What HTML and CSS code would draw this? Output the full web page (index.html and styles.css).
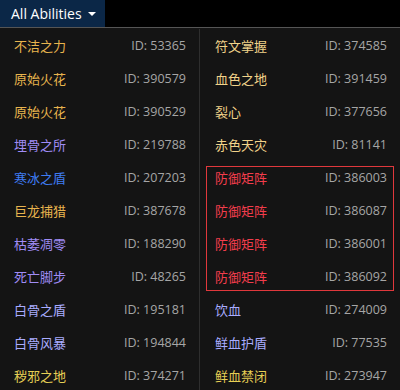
FILE: index.html
```html
<!DOCTYPE html>
<html lang="zh">
<head>
<meta charset="utf-8">
<title>All Abilities</title>
<link rel="stylesheet" href="styles.css">
</head>
<body>
<div class="topbar">
  <button class="filter">All Abilities <span class="caret"></span></button>
</div>
<div class="panel">
  <div class="col left">
    <div class="row"><span class="name gold">不洁之力</span><span class="id">ID: 53365</span></div>
    <div class="row"><span class="name gold">原始火花</span><span class="id">ID: 390579</span></div>
    <div class="row"><span class="name gold">原始火花</span><span class="id">ID: 390529</span></div>
    <div class="row"><span class="name purple">埋骨之所</span><span class="id">ID: 219788</span></div>
    <div class="row"><span class="name blue">寒冰之盾</span><span class="id">ID: 207203</span></div>
    <div class="row"><span class="name gold">巨龙捕猎</span><span class="id">ID: 387678</span></div>
    <div class="row"><span class="name purple">枯萎凋零</span><span class="id">ID: 188290</span></div>
    <div class="row"><span class="name purple">死亡脚步</span><span class="id">ID: 48265</span></div>
    <div class="row"><span class="name peri">白骨之盾</span><span class="id">ID: 195181</span></div>
    <div class="row"><span class="name peri">白骨风暴</span><span class="id">ID: 194844</span></div>
    <div class="row"><span class="name yellow">秽邪之地</span><span class="id">ID: 374271</span></div>
  </div>
  <div class="col right">
    <div class="row"><span class="name cream">符文掌握</span><span class="id">ID: 374585</span></div>
    <div class="row"><span class="name cream">血色之地</span><span class="id">ID: 391459</span></div>
    <div class="row"><span class="name cream">裂心</span><span class="id">ID: 377656</span></div>
    <div class="row"><span class="name cream">赤色天灾</span><span class="id">ID: 81141</span></div>
    <div class="group">
      <div class="row"><span class="name red">防御矩阵</span><span class="id">ID: 386003</span></div>
      <div class="row"><span class="name red">防御矩阵</span><span class="id">ID: 386087</span></div>
      <div class="row"><span class="name red">防御矩阵</span><span class="id">ID: 386001</span></div>
      <div class="row"><span class="name red">防御矩阵</span><span class="id">ID: 386092</span></div>
    </div>
    <div class="row"><span class="name peri">饮血</span><span class="id">ID: 274009</span></div>
    <div class="row"><span class="name peri">鲜血护盾</span><span class="id">ID: 77535</span></div>
    <div class="row"><span class="name yellow">鲜血禁闭</span><span class="id">ID: 273947</span></div>
  </div>
</div>
</body>
</html>
```
FILE: styles.css
```css
html, body {
  margin: 0;
  padding: 0;
  background: #141414;
  height: 100%;
  overflow: hidden;
}
body {
  font-family: "Open Sans", "Noto Sans", "Noto Sans CJK SC", sans-serif;
}
.topbar {
  height: 27px;
  background: #000;
  border-bottom: 1px solid #555;
  display: flex;
}
.filter {
  width: 105px;
  height: 27px;
  background: #0b2747;
  border: none;
  margin: 0;
  padding: 0 0 0 11px;
  color: #fff;
  font-family: "Open Sans", sans-serif;
  font-size: 14px;
  font-weight: 500;
  display: flex;
  align-items: center;
  gap: 6px;
  text-align: left;
}
.caret {
  width: 0;
  height: 0;
  border-left: 4px solid transparent;
  border-right: 4px solid transparent;
  border-top: 4px solid #fff;
  margin-top: 1px;
}
.panel {
  display: flex;
  padding-top: 1px;
  height: 361px;
  overflow: hidden;
}
.col {
  display: flex;
  flex-direction: column;
}
.left {
  width: 199px;
  border-right: 1px solid #2e2e2e;
}
.right {
  width: 200px;
}
.row {
  height: 33px;
  flex-shrink: 0;
  display: flex;
  align-items: center;
  justify-content: space-between;
  padding: 0 13px 0 14px;
  box-sizing: border-box;
}
.right .row {
  padding-left: 15px;
}
.name {
  font-family: "Noto Sans CJK SC", sans-serif;
  font-size: 13px;
}
.id {
  font-family: "Open Sans", sans-serif;
  font-size: 12.5px;
  color: #a6a6a6;
}
.group {
  position: relative;
  flex-shrink: 0;
}
.group::after {
  content: "";
  position: absolute;
  top: 5px;
  bottom: 2px;
  left: 6px;
  right: 6px;
  border: 1px solid #e0383c;
  pointer-events: none;
}
.gold { color: #e8b44e; }
.cream { color: #f1d38a; }
.yellow { color: #e6cf55; }
.purple { color: #a08cf6; }
.peri { color: #a9acff; }
.blue { color: #3f7cf2; }
.red { color: #f23d4c; }
```
